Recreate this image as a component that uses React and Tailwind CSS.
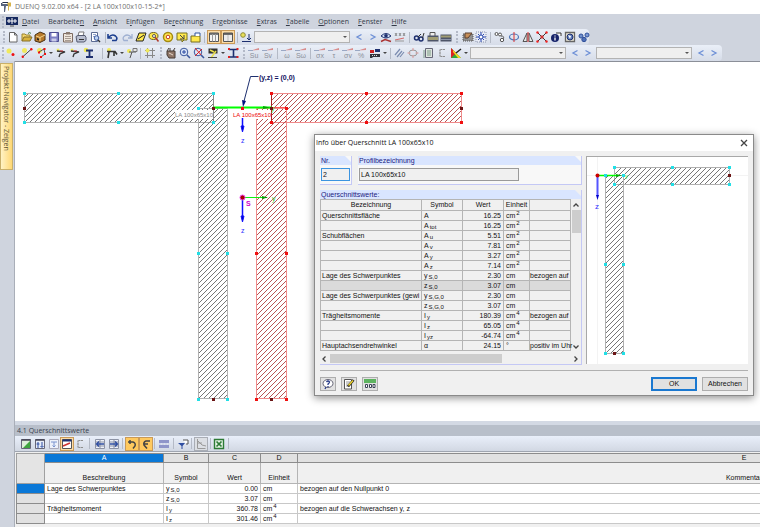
import React, { useState } from 'react';
import clsx from 'clsx';

const NAVY = '#1d2f6f';

const glyphs = {
  file: <path d="M2.500 1.500h5l2.500 2.500v7h-7.500zM7.500 1.500v2.500h2.500" fill="#fff" stroke="#666" />,
  open: (
    <>
      <path d="M1 10V3h3l1 1h4v2" fill="#f5d76e" stroke="#9a8430" />
      <path d="M1 10l2-4h8l-2 4z" fill="#d9b33c" stroke="#86702a" />
      <path d="M7 2.500q2-2 3 0" fill="none" stroke="#3c7a3c" />
    </>
  ),
  book: (
    <>
      <path d="M1 4l5-3 5 2v6l-5 2.500-5-1.500z" fill="#b77a2b" stroke="#4b3215" />
      <path d="M2 5l4 1.500v3.500M6 6.500l5-2.500" stroke="#f4d58d" fill="none" />
      <path d="M3 7l2 .8v1.700l-2-.7z" fill="#222" />
    </>
  ),
  save: (
    <>
      <path d="M1.500 1.500h9v9h-9z" fill="#7c7fc4" stroke="#4b4d92" />
      <path d="M3.500 2h5v3.500h-5z" fill="#fff" />
      <path d="M3.500 7.500h5v3h-5z" fill="#c9cbe8" />
    </>
  ),
  clipboard: (
    <>
      <path d="M1.500 2.500h9v8.500h-9z" fill="#efe6dc" stroke="#7d6b61" />
      <path d="M4 1h4v2.500h-4z" fill="#8a7a70" />
      <path d="M3 5.500h6M3 7.500h6M3 9.500h6" stroke="#a79b92" />
    </>
  ),
  print: (
    <>
      <path d="M3 5l1-4h5l-1 4z" fill="#fff" stroke="#777" />
      <path d="M1 5.500l2-1h7l1 2v3l-2 1.500h-7z" fill="#b9bfd0" stroke="#555b70" />
      <path d="M4 8.500h5" stroke="#333" />
    </>
  ),
  preview: (
    <>
      <path d="M2.500 1.500h6v9h-6z" fill="#fff" stroke="#5c6c93" />
      <path d="M4 3.500h3M4 5.500h2" stroke="#8fa3cf" />
      <circle cx="7.500" cy="7" r="2.300" fill="#bcd2f3" stroke="#3d5ba0" />
      <path d="M9 9l2 2" stroke="#333" strokeWidth="1.500" />
    </>
  ),
  undo: <path d="M1 3v4h4M1.500 6.500q3.500-4 7-1.500 2.500 2 .5 4.500h-4" fill="none" stroke="#1c3f8f" strokeWidth="1.600" />,
  redo: <path d="M11 3v4h-4M10.500 6.500q-3.500-4-7-1.500-2.500 2-.5 4.500h4" fill="none" stroke="#9fb0d2" strokeWidth="1.300" />,
  slab: (
    <>
      <path d="M4 2h7l-3 8h-7z" fill="#ffe94d" stroke="#222" />
      <path d="M3 8l6-4" stroke="#222" />
    </>
  ),
  zoomYellow: (
    <>
      <ellipse cx="5.500" cy="5" rx="4.500" ry="3.500" fill="#ffe94d" stroke="#6d6120" />
      <path d="M7 6l3.500 4.500" stroke="#b13a2a" strokeWidth="1.500" />
      <circle cx="6" cy="5" r="1.500" fill="#fff" stroke="#555" />
    </>
  ),
  ring: (
    <>
      <circle cx="6" cy="6" r="4.500" fill="#ffe94d" stroke="#a48a12" strokeWidth="1.500" />
      <circle cx="6" cy="6" r="1.800" fill="#fff" stroke="#c0392b" />
    </>
  ),
  note: (
    <>
      <path d="M1 2h10v7h-3l-2 2v-2h-5z" fill="#ffe94d" stroke="#777020" />
      <path d="M4 4l4 4M8 4v4h-4" stroke="#444" fill="none" />
    </>
  ),
  folderUp: (
    <>
      <path d="M1 5h9v6h-9z" fill="#ffe94d" stroke="#776d20" />
      <path d="M5 5V2h5v3" fill="#fff" stroke="#2e549c" />
    </>
  ),
  table: (
    <>
      <path d="M1.500 2h9v8.500h-9z" fill="#f4f4f4" stroke="#555" />
      <path d="M1.500 3h9" stroke="#555" strokeWidth="1.500" />
      <path d="M4.500 3v7.500M7.500 3v7.500" stroke="#999" />
    </>
  ),
  tablePlain: (
    <>
      <path d="M1.500 2h9v8.500h-9z" fill="#ececec" stroke="#555" />
      <path d="M1.500 3h9" stroke="#444" strokeWidth="1.500" />
      <path d="M6 4v6" stroke="#bbb" />
    </>
  ),
  loadDown: (
    <>
      <circle cx="3" cy="4" r="2.300" fill="#e8df5a" stroke="#8e8a3a" />
      <path d="M9 3v6M7 7l2 2 2-2M2 10.500h9" stroke={NAVY} fill="none" />
    </>
  ),
  prev: <path d="M8.500 3.500L4 6l4.500 2.500" fill="none" stroke="#6d8fd6" strokeWidth="1.300" />,
  next: <path d="M3.500 3.500L8 6l-4.500 2.500" fill="none" stroke="#6d8fd6" strokeWidth="1.300" />,
  eye: (
    <>
      <path d="M1 5q5-5 10 0-5 4-10 0z" fill="#cfdcf2" stroke={NAVY} />
      <circle cx="6" cy="4.800" r="1.800" fill={NAVY} />
      <path d="M1 10.500l4-2 6 2" stroke="#a33" fill="none" strokeWidth="1.500" />
    </>
  ),
  values: (
    <>
      <path d="M1 2l2 3M3 2l-2 3M5 2l2 3M7 2l-2 3M9 2l2 3M11 2l-2 3" stroke="#777" strokeWidth=".8" />
      <path d="M1 9l9-2" stroke="#d46a6a" />
      <path d="M1 10h9" stroke="#999" />
    </>
  ),
  glasses: (
    <>
      <circle cx="3.500" cy="7" r="2" fill="none" stroke={NAVY} strokeWidth="1.500" />
      <circle cx="8" cy="8" r="2" fill="none" stroke={NAVY} strokeWidth="1.500" />
      <path d="M5 6l3-3M9.500 7l1.500-5" stroke="#333" />
    </>
  ),
  report: (
    <>
      <path d="M3 5V1.500h5V5" fill="#eee" stroke="#555" />
      <path d="M.5 4.500h11v6h-11z" fill="#4e5568" />
      <path d="M2 6v3M4 6v3M6 6v3M8 6v3M10 6v3" stroke="#f3e57e" />
    </>
  ),
  abacus: (
    <>
      <path d="M.5 3.500h11v7h-11z" fill="#4e5568" />
      <path d="M2 4.500v2M4 4.500v2M6 4.500v2M8 4.500v2M10 4.500v2" stroke="#f3e57e" />
      <path d="M1.500 8.500h9" stroke="#c9d2e6" strokeDasharray="1 1" />
    </>
  ),
  handSheet: (
    <>
      <path d="M1 3h10v7h-10z" fill="#8f8f8f" stroke="#555" strokeDasharray="1 1" />
      <path d="M3 2h7l-4 5h-3z" fill="#c68e58" stroke="#5b4030" />
    </>
  ),
  gear: (
    <>
      <path d="M1 1h10v10h-10z" fill="#e8ecf6" stroke="#8a93ac" strokeDasharray="1 1" />
      <path d="M6 1v10M1 6h10M3 3l6 6M9 3l-6 6" stroke="#2d4bb0" />
      <circle cx="6" cy="6" r="2" fill="#fff" stroke="#2d4bb0" />
    </>
  ),
  nodes: (
    <>
      <circle cx="2.500" cy="3" r="1.500" fill="#fff" stroke="#555" />
      <circle cx="6" cy="3.500" r="1.500" fill="#fff" stroke="#555" />
      <circle cx="8" cy="9" r="1.700" fill="#fff" stroke="#555" />
      <path d="M7 5q4 0 2 3" fill="none" stroke="#555" />
    </>
  ),
  rotate: (
    <>
      <ellipse cx="6" cy="6" rx="4.500" ry="3" fill="none" stroke="#4d76b8" strokeWidth="1.200" />
      <path d="M6 1v10" stroke="#d33" />
    </>
  ),
  mirror: (
    <>
      <path d="M5 2v8.500h-4zM7 2v8.500h4z" fill="#e8e8e8" stroke="#555" />
      <path d="M6 1v10" stroke="#d33" />
    </>
  ),
  explode: (
    <>
      <path d="M1 1l10 10M11 1L1 11" stroke="#333" />
      <circle cx="1.500" cy="1.500" r="1.200" fill="#e22" />
      <circle cx="10.500" cy="1.500" r="1.200" fill="#e22" />
      <circle cx="1.500" cy="10.500" r="1.200" fill="#e22" />
      <circle cx="10.500" cy="10.500" r="1.200" fill="#e22" />
      <path d="M4.500 4.500h3v3h-3z" fill="#c33" />
    </>
  ),
  info: (
    <>
      <circle cx="5" cy="7" r="4" fill="#17246b" />
      <path d="M5 4.500v1M5 6.500v3" stroke="#fff" strokeWidth="1.300" />
      <path d="M6 2h5v3" fill="#fff" stroke="#333" />
    </>
  ),
  frameView: (
    <>
      <path d="M1.500 1.500h9v9h-9z" fill="#f2eedc" stroke="#666" strokeWidth="1.300" />
      <circle cx="6" cy="6" r="3" fill="#5e7cbb" stroke={NAVY} />
      <path d="M4 4l3 1-1 3" fill="#fff" />
    </>
  ),
  balls: (
    <>
      <circle cx="3" cy="5" r="2" fill="#6f8fcc" stroke="#30509a" />
      <circle cx="9" cy="4" r="2" fill="#7d9bd6" stroke="#30509a" />
      <circle cx="6" cy="8.500" r="2.200" fill="#4e70b8" stroke="#30509a" />
    </>
  ),
  point: (
    <>
      <circle cx="4" cy="4" r="2.500" fill="#f0e95c" />
      <circle cx="8" cy="7.500" r="1.500" fill="#e11" />
    </>
  ),
  line: (
    <>
      <circle cx="3.500" cy="3.500" r="2.500" fill="#f0e95c" />
      <path d="M1.500 10L10.500 2" stroke="#444" />
      <circle cx="1.800" cy="9.800" r="1.200" fill="#e11" />
      <circle cx="10.300" cy="2.200" r="1.200" fill="#e11" />
    </>
  ),
  polyline: (
    <>
      <circle cx="3.500" cy="3.500" r="2.500" fill="#f0e95c" />
      <path d="M3 5l5-3 1 5-4 3" fill="none" stroke="#555" />
      <path d="M7.500 1h2v2h-2zM2 4.500h2v2h-2zM8 6h2v2h-2zM4 9h2v2h-2z" fill="#e11" />
    </>
  ),
  flag: (
    <>
      <circle cx="3" cy="3" r="1.500" fill="#f0e95c" />
      <path d="M2 4l8 1-5 2-1 3" fill="none" stroke="#333" strokeWidth="1.300" />
      <path d="M5 4h3" stroke="#c33" />
    </>
  ),
  beam: (
    <>
      <circle cx="3" cy="3" r="2.300" fill="#f0e95c" />
      <path d="M3 3.500h7M6.500 3.500v6M3 10h7" stroke={NAVY} strokeWidth="1.800" />
    </>
  ),
  wall: (
    <>
      <circle cx="3" cy="3" r="2" fill="#f0e95c" />
      <path d="M1 4.500h8l2 3M3 5l-1 6M8 5v4" fill="none" stroke="#333" strokeWidth="1.600" />
    </>
  ),
  dim: (
    <>
      <circle cx="3" cy="4" r="2" fill="#f0e95c" />
      <path d="M3 5h7M6 5l-2 6" stroke="#555" />
      <path d="M7 1.500h4v3h-4z" fill="#e6e6e6" stroke="#777" />
    </>
  ),
  gridPoint: (
    <>
      <path d="M3.500 1v10M8.500 1v10M1 3.500h10M1 8.500h10" stroke="#888" />
      <circle cx="3.500" cy="3.500" r="2" fill="#f0e95c" />
    </>
  ),
  pan: (
    <>
      <path d="M2 4h8v7h-6l-2-3z" fill="#8e7567" stroke="#443a35" />
      <path d="M2 4l2-3M5 4V1M8 4l2-3" stroke="#443a35" />
      <path d="M4 6l4 2" stroke="#e8d9cd" />
    </>
  ),
  zoomIn: (
    <>
      <circle cx="5" cy="5" r="3.800" fill="#dbe6f8" stroke="#3a569c" />
      <path d="M5 3v4M3 5h4" stroke="#2846a0" />
      <path d="M8 8l3 3" stroke="#3a569c" strokeWidth="1.600" />
    </>
  ),
  zoomOut: (
    <>
      <circle cx="5" cy="5" r="3.800" fill="#dbe6f8" stroke="#3a569c" />
      <path d="M2 1l7 8M9 2l-7 7" stroke="#d22" />
      <path d="M8 8l3 3" stroke="#3a569c" strokeWidth="1.600" />
    </>
  ),
  render: (
    <>
      <path d="M1.500 1.500h9v5h-9z" fill="#333" />
      <path d="M3 3l4 2M4 11l5-7" stroke="#e9df4e" strokeWidth="1.500" />
      <path d="M1 10.500h9" stroke="#444" />
    </>
  ),
  iSection: (
    <>
      <path d="M2 2.500h9M6.500 2.500v7M2 10h9" stroke={NAVY} strokeWidth="1.600" />
      <path d="M1 1h2v2h-2zM9.500 1h2v2h-2zM1 9h2v2h-2zM9.500 9h2v2h-2z" fill="#d22" />
    </>
  ),
  lines: <path d="M2 8l5-6M4 10l5-6M7 10l4-5" stroke="#7b8cb0" strokeWidth="1.200" />,
  target: (
    <>
      <ellipse cx="6" cy="6" rx="4" ry="3" fill="none" stroke="#999" />
      <path d="M6 1v3M6 8v3M.5 6h3M8.500 6h3" stroke="#d99" />
    </>
  ),
  layers: (
    <>
      <path d="M3.500 1.500h7v9h-7z" fill="#dfe6e0" stroke="#667" />
      <path d="M2 3v8M5 4h4M5 6h4M5 8h4" stroke="#7a9a86" />
    </>
  ),
  bracket: <path d="M9 2.500h-5v7h5" fill="none" stroke="#8d8d8d" strokeWidth="1.200" strokeDasharray="2 .5" />,
  colors: (
    <>
      <path d="M1 1v10h10z" fill="#2fa836" />
      <path d="M1 1v10l5-5z" fill="#d22" />
      <path d="M3 3l8 8h-3l-5-6z" fill="#f4d51f" />
      <path d="M6 6l5-4" stroke="#222" strokeWidth="1.500" />
    </>
  ),
  stress: (
    <>
      <path d="M1 3h4v3h-4z" fill="#c22" />
      <path d="M6 2h5v3h-5z" fill={NAVY} />
      <path d="M1 7h10v3h-7l-1 1h-2z" fill="#30323c" />
      <path d="M3 8.500h6" stroke="#ddd" strokeDasharray="1 1" />
    </>
  ),
  editTable: (
    <>
      <path d="M1.500 1.500h9v9h-9z" fill="#dcefd9" stroke="#667" />
      <path d="M1.500 2h9" stroke="#445" strokeWidth="1.500" />
      <path d="M3 10l7-7v7z" fill="#3fa53f" />
    </>
  ),
  tableA: (
    <>
      <path d="M1.500 1.500h9v9h-9z" fill="#e6ecf8" stroke="#667" />
      <path d="M1.500 2h9" stroke="#445" strokeWidth="1.500" />
      <path d="M4 4v6M2.500 6h3M8 4v5M6.500 8l1.500 1.500L9.500 8" stroke="#2e4da0" fill="none" />
    </>
  ),
  tableB: (
    <>
      <path d="M1.500 1.500h9v9h-9z" fill="#edf1fa" stroke="#aab" />
      <path d="M3 4h6M6 4v5M4.500 7.500L6 9l1.500-1.500" stroke="#7a94cf" fill="none" />
    </>
  ),
  tableC: (
    <>
      <path d="M1.500 1.500h9v9h-9z" fill="#fff" stroke="#555" />
      <path d="M1.500 2.500h9" stroke={NAVY} strokeWidth="2" />
      <path d="M2 8l7-3" stroke="#c33" strokeWidth="1.500" />
    </>
  ),
  goLeft: (
    <>
      <path d="M1.500 1.500h9v9h-9zM1.500 4h9M1.500 8h9M6 1.500v9" fill="#eef1f8" stroke="#8c93a5" />
      <path d="M10 6h-7M5 3.500L2.500 6 5 8.500" stroke="#2e4da0" fill="none" strokeWidth="1.400" />
    </>
  ),
  goRight: (
    <>
      <path d="M1.500 1.500h9v9h-9zM1.500 4h9M1.500 8h9M6 1.500v9" fill="#eef1f8" stroke="#8c93a5" />
      <path d="M2 6h7M7 3.500L9.500 6 7 8.500" stroke="#2e4da0" fill="none" strokeWidth="1.400" />
    </>
  ),
  curveR: <path d="M2 4h5q3 1 2 4l-2 2.500M4 2v4" fill="none" stroke="#444" strokeWidth="1.500" />,
  curveL: <path d="M10 3h-4q-3 1-2 4l3 3.500M4 6h4" fill="none" stroke="#444" strokeWidth="1.500" />,
  rows: (
    <>
      <path d="M1 2h10v3h-10zM1 7h10v3h-10z" fill="#8f95c9" />
      <path d="M1 6h10" stroke="#c7cae6" strokeDasharray="2 1" />
    </>
  ),
  filter: (
    <>
      <path d="M1 5h7l-2.500 3v3h-1v-3z" fill="#2e4da0" />
      <path d="M6 2h5v4h-2" fill="#fff" stroke="#555" />
    </>
  ),
  chartOff: <path d="M2.500 1v9.500h8M3 3l4 4 4 1M3 5h4" fill="none" stroke="#9a9a9a" />,
  excel: (
    <>
      <path d="M1.500 1.500h9v9h-9z" fill="#e6f4e6" stroke="#2c7a34" strokeWidth="1.400" />
      <path d="M3.500 3.500l5 5M8.500 3.500l-5 5" stroke="#2c7a34" strokeWidth="1.700" />
    </>
  ),
  help: (
    <>
      <ellipse cx="6" cy="5.500" rx="5" ry="4" fill="#fff" stroke="#667" />
      <path d="M4.500 4q1.500-2 3 0 0 1-1.500 2v1M6 8v1M4 9l-1 2" fill="none" stroke="#2b3f8b" strokeWidth="1.300" />
    </>
  ),
  pencil: (
    <>
      <path d="M1.500 1.500h7v9.500h-7z" fill="#fff" stroke="#555" />
      <path d="M3 4h4M3 6h3M3 8h2" stroke="#999" />
      <path d="M5 8.500L10.500 2" stroke="#222" strokeWidth="2.600" />
      <path d="M5.500 7.500L10 2.500" stroke="#efd52e" strokeWidth="1.500" />
    </>
  ),
  units: (
    <>
      <path d="M0 1h12v4h-12z" fill="#5db35f" />
      <path d="M1.500 6.500v3h2v-3zM5.500 6.500v3h2v-3zM9 6.500v3h2v-3z" fill="#fff" stroke="#3d4457" />
    </>
  ),
};

// result diagram buttons: a small slanted flag above a greyed symbol
const results = { su: 'Su', sv: 'Sv', omega: 'ω', somega: 'Sω', sigmax: 'σx', tau: 'τ', sigmav: 'σv', percent: '%' };

const Icon = ({ name }) => (
  <svg viewBox="0 0 12 12" className="h-3 w-3 shrink-0 fill-none" aria-hidden="true">
    {results[name] ? (
      <>
        <path d="M3 3.500L11 1v2z" fill="#d98d8d" />
        <path d="M0 3.500h5" stroke="#9aa8c4" />
        <text x="6" y="11" textAnchor="middle" fontSize="7" fill="#8b8f99" className="font-['Liberation_Sans',sans-serif]">{results[name]}</text>
      </>
    ) : glyphs[name]}
  </svg>
);

const ToolButton = ({ name, active, off }) => (
  <button
    type="button"
    aria-label={name}
    className={clsx(
      'flex h-[14px] items-center justify-center',
      active && 'w-[14px] border border-[#c99a58]',
      active === true && 'bg-[#fcdca6]',
      active === 'strong' && 'bg-[#ffc95e]',
      off && 'w-[14px] border border-[#a9adb5] bg-[#dcdfe4]',
      !active && !off && 'w-3'
    )}
  >
    <Icon name={name} />
  </button>
);

const Group = ({ names, className }) => (
  <div className={clsx('flex shrink-0 items-center justify-between', className)}>
    {names.map((n) => <ToolButton key={n} name={n} />)}
  </div>
);

const Sep = () => <div className="h-[11px] w-px shrink-0 bg-[#b4bac6]" />;
const Grip = () => <div className="h-[12px] w-0 shrink-0 border-l-2 border-dotted border-[#b4bac8]" />;
const More = () => <div className="h-0 w-0 shrink-0 border-x-2 border-t-2 border-x-transparent border-t-[#444]" />;

const Combo = ({ label }) => (
  <div className="relative h-3 w-24 shrink-0">
    <select aria-label={label} className="block h-full w-full appearance-none border border-[#b3b3b3] bg-[#efefef]" />
    <span className="pointer-events-none absolute right-[3px] top-[5px] border-x-2 border-t-2 border-x-transparent border-t-[#555]" />
  </div>
);

const menu = [
  ['', 'D', 'atei'],
  ['Bearbeite', 'n', ''],
  ['', 'A', 'nsicht'],
  ['E', 'i', 'nfügen'],
  ['Be', 'r', 'echnung'],
  ['Er', 'g', 'ebnisse'],
  ['', 'E', 'xtras'],
  ['', 'T', 'abelle'],
  ['', 'O', 'ptionen'],
  ['', 'F', 'enster'],
  ['', 'H', 'ilfe'],
];

const TopBars = () => (
  <header>
    <div className="flex h-[14px] items-center gap-[3px] bg-white text-[7px] text-[#707070]">
      <svg viewBox="0 0 12 12" className="h-3 w-3" aria-hidden="true">
        <path d="M1 3h7v2h-2l-1 6h-1V5H1z" fill="#59657f" />
        <path d="M7 1.500h4v4h-2v4h-1v-5z" fill="#d5b34c" />
        <path d="M1 3l2-1.500h5" stroke="#27324c" fill="none" />
      </svg>
      <h1 className="whitespace-nowrap">DUENQ 9.02.00 x64 - [2 LA 100x100x10-15-2*]</h1>
    </div>
    <nav className="flex h-[15px] items-center bg-[#cfd4de] pl-[2px] text-[7px] text-[#333a48]">
      <Grip />
      <svg viewBox="0 0 12 10" className="ml-[2px] mr-[4px] h-[10px] w-3" aria-hidden="true">
        <path d="M0 0h12v8h-12z" fill="#16295f" />
        <path d="M1 4h10M3 2v4M9 2v4M6 1v6" stroke="#fff" />
        <path d="M4 9h4" stroke="#555" />
      </svg>
      <div className="flex gap-[9px]">
        {menu.map(([pre, key, post]) => (
          <button key={pre + key + post} type="button" className="leading-[10px]">
            {pre}<span className="underline">{key}</span>{post}
          </button>
        ))}
      </div>
    </nav>
    <div className="bg-[#cfd4de]">
      <div className="flex h-4 w-[589px] items-center rounded-r-sm bg-linear-to-b from-[#eaeff8] to-[#d6dce8] pl-[3px]">
        <Grip />
        <Group className="ml-[2px] w-[94px]" names={['file', 'open', 'book', 'save', 'clipboard', 'print', 'preview']} />
        <div className="ml-[4px] mr-px"><Sep /></div>
        <Group className="w-[95px]" names={['undo', 'redo', 'slab', 'zoomYellow', 'ring', 'note', 'folderUp']} />
        <div className="mx-[2px]"><Sep /></div>
        <ToolButton name="table" active />
        <ToolButton name="tablePlain" active />
        <div className="mx-[2px]"><Sep /></div>
        <ToolButton name="loadDown" />
        <div className="ml-[2px] mr-[3px]"><Combo label="Lastfall" /></div>
        <Group className="w-[53px]" names={['prev', 'next', 'eye', 'values']} />
        <div className="mx-[3px]"><Sep /></div>
        <Group className="w-[39px]" names={['glasses', 'report', 'abacus']} />
        <div className="mx-[4px]"><Grip /></div>
        <Group className="w-[25px]" names={['handSheet', 'gear']} />
        <div className="mx-[3px]"><Sep /></div>
        <Group className="w-[96px]" names={['nodes', 'rotate', 'mirror', 'explode', 'info', 'frameView', 'balls']} />
      </div>
      <div className="flex h-4 w-[722px] items-center rounded-r-sm bg-linear-to-b from-[#eaeff8] to-[#d6dce8] pl-[2px]">
        <Grip />
        <Group className="ml-px w-[43px]" names={['point', 'line', 'polyline']} />
        <div className="ml-px mr-[2px]"><More /></div>
        <ToolButton name="flag" />
        <Group className="ml-[2px] w-[26px]" names={['flag', 'beam']} />
        <div className="ml-[7px] mr-[3px]"><Sep /></div>
        <ToolButton name="wall" />
        <div className="mx-[2px]"><More /></div>
        <ToolButton name="dim" />
        <div className="ml-[2px] mr-[3px]"><Sep /></div>
        <ToolButton name="gridPoint" />
        <div className="ml-[4px] mr-[3px]"><Grip /></div>
        <Group className="w-[54px]" names={['pan', 'zoomIn', 'zoomOut', 'render']} />
        <div className="ml-[2px] mr-[2px]"><More /></div>
        <ToolButton name="iSection" />
        <div className="ml-[4px] mr-[3px]"><Grip /></div>
        <Group className="w-[26px]" names={['su', 'sv']} />
        <div className="mx-[3px]"><Sep /></div>
        <Group className="w-[26px]" names={['omega', 'somega']} />
        <div className="mx-[3px]"><Sep /></div>
        <Group className="w-[67px]" names={['sigmax', 'tau', 'sigmav', 'percent', 'stress']} />
        <div className="mx-[2px]"><More /></div>
        <div className="ml-px mr-[2px]"><Sep /></div>
        <Group className="w-[69px]" names={['lines', 'target', 'layers', 'bracket', 'colors']} />
        <div className="mx-[2px]"><More /></div>
        <Combo label="Ansicht" />
        <Group className="ml-[3px] mr-[2px] w-[25px]" names={['prev', 'next']} />
        <Combo label="Schnitt" />
        <Group className="ml-[3px] w-[25px]" names={['prev', 'next']} />
      </div>
    </div>
  </header>
);

const Dots = ({ points, color, size = 3 }) => points.map(([x, y]) => (
  <rect key={`${x}-${y}`} x={x - 1} y={y - 1} width={size} height={size} fill={color} />
));

const Hatch = ({ id, color }) => (
  <pattern id={id} width="5" height="5" patternUnits="userSpaceOnUse">
    <path d="M-1 1l2-2M-1 6L6 -1M4 6l2-2" stroke={color} strokeWidth=".9" />
  </pattern>
);

const CYAN = '#22dfe6';

const Drawing = () => (
  <svg className="absolute inset-0 h-full w-full font-['Liberation_Sans',sans-serif]" role="img" aria-label="Querschnitt">
    <defs>
      <Hatch id="hatch-gray" color="#666" />
      <Hatch id="hatch-red" color="#b04040" />
    </defs>
    <g fill="url(#hatch-gray)" stroke="#b0b0b0">
      <path d="M9.500 31.500h189v29h-189z" />
      <path d="M183.500 46.500h29v290h-29z" />
    </g>
    <g fill="url(#hatch-red)" stroke="#f08a8a">
      <path d="M256.500 31.500h190v29h-190z" />
      <path d="M241.500 46.500h30v290h-30z" />
    </g>
    <path d="M198.500 31v30" stroke="#888" />
    <path d="M256.500 31v30" stroke="#a22" />
    <path d="M160 48h38v9h-38zM218 48h38v9h-38z" fill="#fff" />
    <g fontSize="6" textAnchor="end">
      <text x="198" y="55" fill="#888">LA 100x65x10</text>
      <text x="256" y="55" fill="#e00">LA 100x65x10</text>
    </g>
    <path d="M198 45.500h59" stroke="#0f0" strokeWidth="2" />
    <path d="M257 45.500h15" stroke="#f55" />
    <path d="M248 44l7 1.500-7 1.500z" fill="#0a0" />
    <text x="256" y="49" fontSize="7" fill="#3d3">y</text>
    <path d="M228.500 41l7-26.500h8" fill="none" stroke={NAVY} />
    <path d="M227 38l4 1-3 6z" fill="#001080" />
    <text x="244" y="18" fontSize="7" fontWeight="bold" fill="#101060">(y,z) = (0,0)</text>

    <g stroke="#11f" fill="#0000c8">
      <path d="M227.500 56v9M227.500 136v20" strokeWidth="1.500" />
      <path d="M226 64h3l-1.500 6zM226 154h3l-1.500 6z" />
    </g>
    <path d="M229 135.500h23" stroke="#1e1" />
    <path d="M247 134l6 1.500-6 1.500z" fill="#090" />
    <text x="226" y="81" fontSize="7" fill="#33f">z</text>
    <text x="226" y="171" fontSize="7" fill="#33f">z</text>
    <text x="257" y="139" fontSize="7" fill="#3c3">y</text>
    <circle cx="227.500" cy="135.500" r="2.500" fill="#a00" stroke="#e4e" />
    <text x="231" y="144" fontSize="7" fontWeight="bold" fill="#c0c">S</text>

    <Dots color={CYAN} points={[[9, 31], [103, 31], [198, 31], [9, 60], [103, 60], [198, 60], [183, 46], [183, 191], [212, 191], [183, 337], [212, 337]]} />
    <Dots color="#f01010" points={[[256, 31], [351, 31], [446, 31], [256, 60], [351, 60], [446, 60], [271, 46], [227, 46], [241, 191], [271, 191], [241, 337], [271, 337]]} />
    <Dots color="#6b1515" points={[[9, 46], [198, 46], [446, 46], [198, 337], [256, 46], [256, 337]]} />
  </svg>
);

const PreviewDrawing = () => (
  <svg className="h-full w-full font-['Liberation_Sans',sans-serif]" role="img" aria-label="LA 100x65x10">
    <path d="M10.500 0v208M0 18.500h162" stroke="#f3f3f3" />
    <g fill="url(#hatch-gray)" stroke="#b0b0b0">
      <path d="M27.500 10.500h115v17h-115z" />
      <path d="M18.500 18.500h18v178h-18z" />
    </g>
    <path d="M10 18.500h19" stroke="#0f0" strokeWidth="1.500" />
    <path d="M29 17l6 1.500-6 1.500z" fill="#0a0" />
    <text x="38" y="21" fontSize="6" fill="#3d3">y</text>
    <path d="M10.500 19v20" stroke="#55f" strokeWidth="2" />
    <path d="M9 38h3l-1.500 5z" fill="#00c" />
    <text x="8" y="52" fontSize="8" fill="#33f">z</text>
    <Dots color={CYAN} points={[[27, 10], [85, 10], [142, 10], [27, 27], [85, 27], [142, 27], [18, 18], [36, 18], [18, 107], [36, 107], [18, 196], [36, 196]]} />
    <Dots color="#6b1515" points={[[142, 18], [27, 196]]} />
    <circle cx="10.500" cy="18.500" r="2" fill="#c00" />
  </svg>
);

const Sym = ({ base, sub }) => <>{base}{sub && <sub className="-bottom-px ml-px text-[6px]">{sub}</sub>}</>;
const Unit = ({ base, exp }) => <>{base}{exp && <sup className="ml-px text-[6px]">{exp}</sup>}</>;

const properties = [
  ['Querschnittsfläche', 'A', '', '16.25', 'cm', '2', ''],
  ['', 'A', 'tot', '16.25', 'cm', '2', ''],
  ['Schubflächen', 'A', 'u', '5.51', 'cm', '2', ''],
  ['', 'A', 'v', '7.81', 'cm', '2', ''],
  ['', 'A', 'y', '3.27', 'cm', '2', ''],
  ['', 'A', 'z', '7.14', 'cm', '2', ''],
  ['Lage des Schwerpunktes', 'y', 'S,0', '2.30', 'cm', '', 'bezogen auf'],
  ['', 'z', 'S,0', '3.07', 'cm', '', ''],
  ['Lage des Schwerpunktes (gewi', 'y', 'S,G,0', '2.30', 'cm', '', ''],
  ['', 'z', 'S,G,0', '3.07', 'cm', '', ''],
  ['Trägheitsmomente', 'I', 'y', '180.39', 'cm', '4', 'bezogen auf'],
  ['', 'I', 'z', '65.05', 'cm', '4', ''],
  ['', 'I', 'yz', '-64.74', 'cm', '4', ''],
  ['Hauptachsendrehwinkel', 'α', '', '24.15', '°', '', 'positiv im Uhr'],
];

const GroupTitle = ({ children, htmlFor }) => {
  const Tag = htmlFor ? 'label' : 'h3';
  return (
    <Tag htmlFor={htmlFor} className="block h-[9px] bg-[#d9e5ff] pl-px leading-[9px] text-[#1a1a80] [clip-path:polygon(0_0,calc(100%-6px)_0,100%_6px,100%_100%,0_100%)]">
      {children}
    </Tag>
  );
};

const Chevron = ({ d }) => (
  <svg viewBox="0 0 8 8" className="h-2 w-2" aria-hidden="true">
    <path d={d} fill="none" stroke="#444" strokeWidth="1.300" />
  </svg>
);

const InfoDialog = ({ onClose }) => {
  const [selected, setSelected] = useState(7);
  return (
    <section role="dialog" aria-label="Info über Querschnitt" className="absolute left-[299px] top-[72px] w-[440px] border border-[#8a8a8a] bg-[#f0f0f0] text-[7px] text-[#111] shadow-[0_2px_8px_rgba(0,0,0,0.45)]">
      <div className="flex h-4 items-center justify-between bg-white pl-px pr-[5px]">
        <h2 className="font-['Open_Sans','Noto_Sans',sans-serif] leading-4">Info über Querschnitt LA 100x65x10</h2>
        <button type="button" aria-label="Schließen" onClick={onClose}><Chevron d="M1 1l6 6M7 1l-6 6" /></button>
      </div>
      <div className="px-[5px] pt-[5px]">
        <div className="flex gap-[4px]">
          <div className="flex w-[262px] flex-col">
            <div className="flex gap-[6px]">
              <div className="w-8 border-b border-r border-[#c4c8f5] bg-[#f8f8f8] pb-[3px]">
                <GroupTitle htmlFor="nr">Nr.</GroupTitle>
                <input id="nr" defaultValue="2" className="ml-px mt-[3px] block h-[13px] w-[29px] border border-[#3c94e0] bg-[#f0f0f0] px-px" />
              </div>
              <div className="grow border-b border-r border-[#c4c8f5] bg-[#f8f8f8] pb-[3px]">
                <GroupTitle htmlFor="profil">Profilbezeichnung</GroupTitle>
                <input id="profil" readOnly value="LA 100x65x10" className="ml-px mt-[3px] block h-[13px] w-40 border border-[#9a9a9a] bg-[#f0f0f0] px-px" />
              </div>
            </div>
            <div className="mt-[5px] border-b border-r border-[#c4c8f5] bg-[#f0f0f0]">
              <GroupTitle>Querschnittswerte:</GroupTitle>
              <div className="flex">
                <div className="w-[251px]">
                  <table className="w-full table-fixed border-collapse border border-[#a0a0a0]">
                    <colgroup>
                      <col className="w-[101px]" />
                      <col className="w-[41px]" />
                      <col className="w-[41px]" />
                      <col className="w-[26px]" />
                      <col />
                    </colgroup>
                    <thead>
                      <tr className="h-[11px] leading-[10px]">
                        {['Bezeichnung', 'Symbol', 'Wert', 'Einheit', ''].map((h) => (
                          <th key={h} className="border border-[#b4b4b4] p-0 font-normal">{h}</th>
                        ))}
                      </tr>
                    </thead>
                    <tbody>
                      {properties.map(([name, base, sub, value, unit, exp, note], i) => (
                        <tr
                          key={i}
                          onClick={() => setSelected(i)}
                          className={clsx('h-[10px] whitespace-nowrap leading-[9px]', i === selected && 'bg-[#dadada]')}
                        >
                          <td className="border border-[#b4b4b4] p-0 pl-px">{name}</td>
                          <td className="border border-[#b4b4b4] p-0 pl-[2px]"><Sym base={base} sub={sub} /></td>
                          <td className="border border-[#b4b4b4] p-0 pr-[2px] text-right">{value}</td>
                          <td className="border border-[#b4b4b4] p-0 pl-[2px]"><Unit base={unit} exp={exp} /></td>
                          <td className="border border-[#b4b4b4] p-0">{note}</td>
                        </tr>
                      ))}
                    </tbody>
                  </table>
                </div>
                <div className="flex w-[10px] flex-col items-center pt-[2px]">
                  <Chevron d="M1.500 5.500L4 3l2.500 2.500" />
                  <div className="mt-px h-[23px] w-[9px] bg-[#cdcdcd]" />
                  <div className="mt-auto"><Chevron d="M1.500 2.500L4 5l2.500-2.500" /></div>
                </div>
              </div>
              <div className="mb-px mt-[3px] flex h-[9px] items-center">
                <Chevron d="M5.500 1.500L3 4l2.500 2.500" />
                <div className="ml-[2px] h-full w-[172px] bg-[#cdcdcd]" />
                <div className="ml-auto mr-px"><Chevron d="M2.500 1.500L5 4 2.500 6.500" /></div>
              </div>
            </div>
          </div>
          <div className="h-[208px] grow border-l border-t border-[#a8a8a8] bg-white">
            <PreviewDrawing />
          </div>
        </div>
        <div className="mt-[5px] flex items-center gap-[5px] border-t border-[#b0b0b0] pb-[4px] pt-[6px]">
          {['help', 'pencil', 'units'].map((n) => (
            <button key={n} type="button" aria-label={n} className="flex h-[14px] w-4 items-center justify-center border border-[#adadad] bg-[#e1e1e1]">
              <Icon name={n} />
            </button>
          ))}
          <button type="button" onClick={onClose} className="ml-auto h-[14px] w-[46px] border-2 border-[#1a78d0] bg-[#e1e1e1] leading-[10px]">OK</button>
          <button type="button" onClick={onClose} className="h-[14px] w-[46px] border border-[#adadad] bg-[#e1e1e1] leading-3">Abbrechen</button>
        </div>
      </div>
    </section>
  );
};

const sheet = [
  ['Lage des Schwerpunktes', 'y', 'S,0', '0.00', 'cm', '', 'bezogen auf den Nullpunkt 0'],
  ['', 'z', 'S,0', '3.07', 'cm', '', ''],
  ['Trägheitsmoment', 'I', 'y', '360.78', 'cm', '4', 'bezogen auf die Schwerachsen y, z'],
  ['', 'I', 'z', '301.46', 'cm', '4', ''],
];

const SheetPanel = () => (
  <section className="h-[106px] border-t-4 border-[#d3d9e4] bg-[#f0f0f0]">
    <h2 className="h-[11px] bg-[#b8bfca] pl-[2px] font-['Open_Sans','Noto_Sans',sans-serif] text-[7px] leading-[11px] text-[#39424f]">4.1 Querschnittswerte</h2>
    <div className="flex h-4 items-center border-b border-[#9fa5b0] bg-linear-to-b from-[#e9effa] to-[#d2d8e3] pl-[5px]">
      <Group className="w-[40px]" names={['editTable', 'tableA', 'tableB']} />
      <ToolButton name="tableC" active />
      <ToolButton name="bracket" />
      <div className="ml-[3px] mr-[4px]"><Sep /></div>
      <Group className="w-[26px]" names={['goLeft', 'goRight']} />
      <div className="mx-[2px]"><Sep /></div>
      <ToolButton name="curveR" active="strong" />
      <ToolButton name="curveL" active="strong" />
      <div className="ml-px mr-[3px]"><Sep /></div>
      <ToolButton name="rows" />
      <div className="mx-[3px]"><Sep /></div>
      <ToolButton name="filter" />
      <div className="mx-[2px]"><Sep /></div>
      <ToolButton name="chartOff" off />
      <div className="mx-[2px]"><Sep /></div>
      <ToolButton name="excel" />
      <div className="mx-[3px]"><Sep /></div>
    </div>
    <div className="overflow-hidden pl-px pt-px">
      <table className="w-[1175px] table-fixed border-collapse text-[7px] text-[#111]">
        <colgroup>
          <col className="w-7" />
          <col className="w-[119px]" />
          <col className="w-[45px]" />
          <col className="w-[52px]" />
          <col className="w-[37px]" />
          <col />
        </colgroup>
        <thead>
          <tr className="h-[9px] leading-[8px]">
            <th rowSpan={2} className="border border-[#a0a0a0] bg-[#e4e4e4] p-0" />
            {['A', 'B', 'C', 'D', 'E'].map((c) => (
              <th key={c} className={clsx('border border-[#8c8c8c] p-0 font-normal', c === 'A' ? 'bg-[#0a78d7] text-white' : 'bg-[#e1e1e1]')}>{c}</th>
            ))}
          </tr>
          <tr className="h-[21px] align-bottom leading-[10px]">
            {['Beschreibung', 'Symbol', 'Wert', 'Einheit', 'Kommentar'].map((h) => (
              <th key={h} className="border border-[#b4b4b4] p-0 font-normal">{h}</th>
            ))}
          </tr>
        </thead>
        <tbody>
          {sheet.map(([name, base, sub, value, unit, exp, note], i) => (
            <tr key={i} className="h-[10px] bg-white leading-[9px]">
              <th className={clsx('border border-[#8c8c8c] p-0', i === 0 ? 'bg-[#0a78d7]' : 'bg-[#e1e1e1]')} />
              <td className="border border-[#c8c8c8] p-0 pl-[2px]">{name}</td>
              <td className="border border-[#c8c8c8] p-0 pl-[2px]"><Sym base={base} sub={sub} /></td>
              <td className="border border-[#c8c8c8] p-0 pr-[2px] text-right">{value}</td>
              <td className="border border-[#c8c8c8] p-0 pl-[2px]"><Unit base={unit} exp={exp} /></td>
              <td className="border border-[#c8c8c8] p-0 pl-[2px]">{note}</td>
            </tr>
          ))}
        </tbody>
      </table>
    </div>
  </section>
);

const App = () => {
  const [dialogOpen, setDialogOpen] = useState(true);

  return (
    <div className="flex h-screen flex-col overflow-hidden bg-[#cfd4de] font-['Open_Sans','Noto_Sans',sans-serif]">
      <TopBars />
      <div className="flex min-h-0 grow">
        {/* Collapsed navigator */}
        <aside className="w-[15px] shrink-0 border-r border-[#a9aeb8] pt-[2px]">
          <button type="button" className="h-[107px] w-[13px] border border-[#c9b06a] bg-linear-to-r from-[#fff3c4] to-[#ffd873] pt-[2px] text-left text-[7px] leading-[11px] text-[#5d5538] [writing-mode:vertical-rl]">
            Projekt-Navigator - Zeigen
          </button>
        </aside>
        <div className="flex min-w-0 grow flex-col font-['Liberation_Sans',sans-serif]">
          <main className="relative min-h-0 grow border-t border-[#8b8f98] bg-white">
            <Drawing />
            {dialogOpen && <InfoDialog onClose={() => setDialogOpen(false)} />}
          </main>
          <SheetPanel />
        </div>
      </div>
    </div>
  );
};

export default App;
